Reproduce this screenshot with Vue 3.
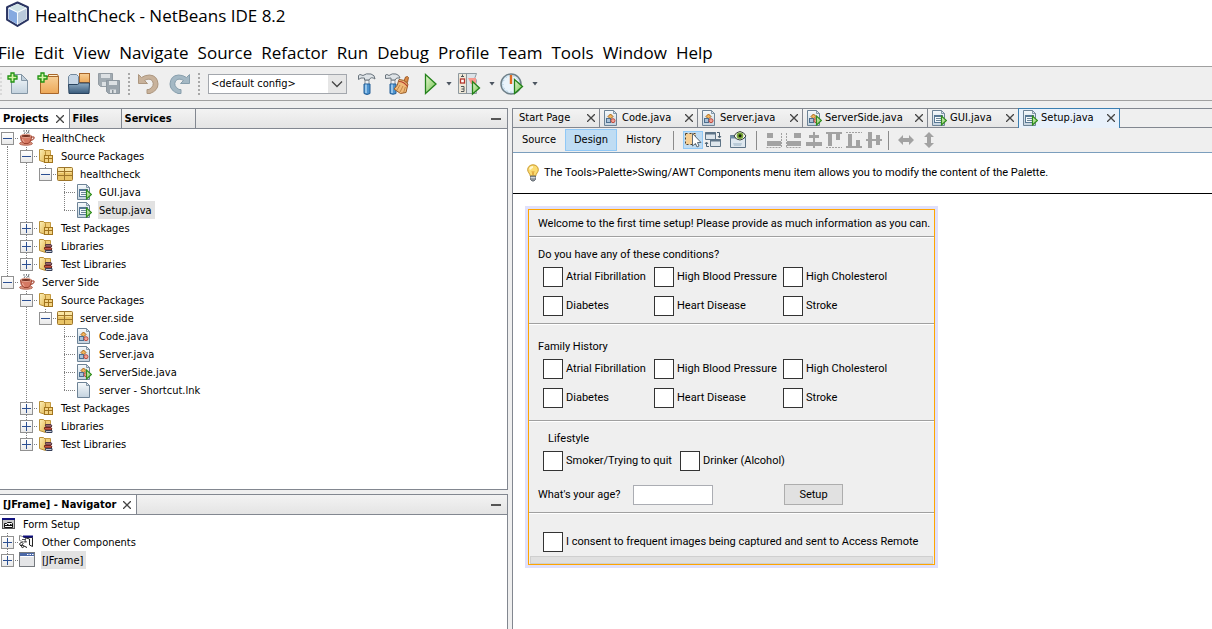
<template>
  <div class="ide">
    <svg class="sprite" aria-hidden="true">
      <linearGradient id="g-paper" x1="0" y1="0" x2="0" y2="1">
        <stop offset="0" stop-color="#f6fafc" />
        <stop offset="1" stop-color="#c3d2de" />
      </linearGradient>
      <linearGradient id="g-orange" x1="0" y1="0" x2="0" y2="1">
        <stop offset="0" stop-color="#f7cf96" />
        <stop offset="1" stop-color="#eda858" />
      </linearGradient>
      <linearGradient id="g-green" x1="0" y1="0" x2="1" y2="1">
        <stop offset="0" stop-color="#eaf8d4" />
        <stop offset="1" stop-color="#6cc04a" />
      </linearGradient>
      <linearGradient id="g-blue" x1="0" y1="0" x2="0" y2="1">
        <stop offset="0" stop-color="#8fabc2" />
        <stop offset="1" stop-color="#385a7b" />
      </linearGradient>
      <linearGradient id="g-folder" x1="0" y1="0" x2="1" y2="1">
        <stop offset="0" stop-color="#fdf0b8" />
        <stop offset="1" stop-color="#e2b652" />
      </linearGradient>

      <symbol id="i-cup" viewBox="0 0 16 16">
        <path d="M5 0v1.500l1 1-1 1.500M7.500 0v1.500l1 1-1 1.500M10 0l-.5 2 .5 1.500" fill="none" stroke="#6f7376" />
        <ellipse cx="7" cy="13.500" rx="6.500" ry="1.800" fill="#d9907b" stroke="#a44f3b" stroke-width=".7" />
        <path d="M1.500 6h11q.3 5.500-3.500 7.500H5Q1.300 11.500 1.500 6z" fill="#d57963" stroke="#9c4230" />
        <ellipse cx="7" cy="6" rx="5.300" ry="1.600" fill="#743223" stroke="#e5a08c" />
        <path d="M12.300 7.200q3.300-1 2.700 1-1 2-4 2.500" fill="none" stroke="#a74936" stroke-width="1.200" />
        <path d="M3.500 9q.5 2.300 2 3.300" stroke="#f1b3a1" fill="none" />
      </symbol>
      <symbol id="i-folder" viewBox="0 0 16 16">
        <path d="M6 2.500h6.500V13H6z" fill="#f0cd79" stroke="#c39a42" />
        <path d="M1.500 1.500h4l2 2v11l-6-2z" fill="url(#g-folder)" stroke="#b88f37" />
      </symbol>
      <symbol id="i-pkgfolder" viewBox="0 0 16 16">
        <use href="#i-folder" />
        <rect x="6.500" y="7.500" width="8" height="7" fill="#f3d383" stroke="#a1741d" />
        <path d="M6 10.500h9M10.500 7v8" stroke="#a1741d" />
      </symbol>
      <symbol id="i-libfolder" viewBox="0 0 16 16">
        <use href="#i-folder" />
        <path d="M7.500 6.500H13l1 1.500-1 1H8.500q-1.500-1-1-2.500z" fill="#a0656c" stroke="#513843" />
        <path d="M6.500 9.500H13l1 1.500-1 1H7.500q-1.500-1-1-2.500z" fill="#c15445" stroke="#6f241b" />
        <path d="M7.500 12.500H14v2H8.500q-1.500 0-1-2z" fill="#c5cad6" stroke="#36405a" />
      </symbol>
      <symbol id="i-package" viewBox="0 0 16 16">
        <rect x=".5" y="1.500" width="15" height="13" rx="1" fill="#e9c466" stroke="#9d752a" />
        <path d="M1 2h14v3H1z" fill="#fae5a2" />
        <path d="M1 5.500h14M1 9.500h14M7.500 2v12" stroke="#9d752a" />
        <path d="M1.500 6.500h5M8.500 6.500h6" stroke="#f8dd92" />
      </symbol>
      <symbol id="i-page" viewBox="0 0 16 16">
        <path d="M1.500.5h9l3 3v12h-12z" fill="url(#g-paper)" stroke="#6d8396" />
        <path d="M10.500.5v3h3z" fill="#dce7ef" stroke="#6d8396" stroke-width=".8" />
      </symbol>
      <symbol id="i-run" viewBox="0 0 16 16">
        <path d="M10.500 6v9l5-4.500z" fill="url(#g-green)" stroke="#2f8c1c" stroke-width="1.200" />
      </symbol>
      <symbol id="i-form" viewBox="0 0 16 16">
        <use href="#i-page" />
        <rect x="3.500" y="5.500" width="8" height="7" fill="#f5f9fb" stroke="#587895" />
        <path d="M3 6h9" stroke="#587895" stroke-width="2" />
        <path d="M5 8.500h5M5 10.500h5" stroke="#6c8598" />
        <use href="#i-run" />
      </symbol>
      <symbol id="i-class" viewBox="0 0 16 16">
        <use href="#i-page" />
        <path d="M7.500 4L10 6.500 7.500 9 5 6.500z" fill="#f1b45c" stroke="#a66318" />
        <rect x="3.500" y="8.500" width="4" height="4" fill="#a9c1d8" stroke="#4d6f8f" />
        <circle cx="10" cy="10.700" r="2" fill="#f2a092" stroke="#bc4c40" />
      </symbol>
      <symbol id="i-mainclass" viewBox="0 0 16 16">
        <use href="#i-class" />
        <use href="#i-run" />
      </symbol>
      <symbol id="i-formroot" viewBox="0 0 16 16">
        <rect x=".5" y="2.500" width="12" height="10" fill="#c9c9c9" stroke="#555" />
        <path d="M0 3h13" stroke="#10107e" stroke-width="2" />
        <path d="M2.500 11.500v-4h2l1-1h4l1 1v4zM5 8.500h1.500M8 8.500h1.500M2.500 9.500h8" fill="#f8f8f8" stroke="#111" />
      </symbol>
      <symbol id="i-other" viewBox="0 0 16 16">
        <path d="M.5 1.500l6 2v5l-6-2z" fill="#fff" stroke="#888" />
        <path d="M5.500 3.500h8v9l-3-1.500V5z" fill="#f6f6f6" stroke="#222" />
        <path d="M4 2.500h10" stroke="#10107e" stroke-width="2" />
        <path d="M3 5.500h4M5 7l3 1" stroke="#555" />
        <path d="M.5 10l2-2L4 9.500 2 12zM3 11l5 2.500M2 12.500q2 2 3 0" fill="#fff" stroke="#111" />
      </symbol>
      <symbol id="i-frame" viewBox="0 0 16 16">
        <rect x=".5" y=".5" width="15" height="14" fill="#e4e5e7" stroke="#75797e" />
        <path d="M1 2.500h14" stroke="#4c69a8" stroke-width="3" />
        <path d="M8 2.500h1.500M10.500 2.500H12M13 2.500h1.500" stroke="#fff" />
        <path d="M1.500 4.500h13" stroke="#fff" />
      </symbol>
      <symbol id="i-bulb" viewBox="0 0 16 18">
        <path d="M8 .8c-3.200 0-5.300 2.200-5.300 5 0 2.500 2.300 3.600 2.600 6.200h5.400c.3-2.600 2.600-3.700 2.600-6.200 0-2.800-2.100-5-5.300-5z" fill="#fbdc72" stroke="#c9982b" />
        <path d="M5 5.500q.8-2.500 3-2.500" stroke="#fff7cf" stroke-width="2" fill="none" />
        <path d="M7 7l1 4 1-4" fill="none" stroke="#d4902a" stroke-width=".7" />
        <path d="M5.500 12h5v3.500l-1.500 1.500H7l-1.500-1.500z" fill="#8d949a" stroke="#555d66" stroke-width=".8" />
        <path d="M5.500 13.700h5" stroke="#e2e6e9" />
      </symbol>

      <symbol id="t-plus" viewBox="0 0 24 24">
        <path d="M4 1h3v3h3v3H7v3H4V7H1V4h3z" fill="#d6f5a6" stroke="#1f9312" stroke-width="1.300" />
      </symbol>
      <symbol id="t-newfile" viewBox="0 0 24 24">
        <path d="M4.500 2.500h10l6 6v13h-16z" fill="url(#g-paper)" stroke="#8496a5" />
        <path d="M14.500 2.500v6h6z" fill="#c3d1dc" stroke="#8496a5" />
        <use href="#t-plus" />
      </symbol>
      <symbol id="t-newproj" viewBox="0 0 24 24">
        <path d="M3.500 4.500h18v17h-18z" fill="url(#g-orange)" stroke="#a8662a" />
        <path d="M11.500 2.500h9l1 2h-10z" fill="#fff0cc" stroke="#a8662a" />
        <use href="#t-plus" />
      </symbol>
      <symbol id="t-open" viewBox="0 0 24 24">
        <path d="M1.500 13V4.500l2-2h6l2 2V13z" fill="#c6d6e6" stroke="#72889c" />
        <rect x="12.500" y="1.500" width="10" height="9" fill="url(#g-orange)" stroke="#a8662a" />
        <path d="M1.500 12.500h9l2-1.500h10l-.5 10.500h-20z" fill="url(#g-blue)" stroke="#29435e" />
      </symbol>
      <symbol id="t-save" viewBox="0 0 24 24">
        <path d="M1.500 1.500h14v13h-12l-2-2z" fill="#a2abb2" stroke="#949ca3" />
        <path d="M4 2h9v4H4zM5 10h7v4H5z" fill="#dce0e3" />
        <path d="M9.500 8.500h13v13h-11l-2-2z" fill="#9aa4ac" stroke="#8d979f" />
        <path d="M12 9h8v4h-8zM13 17.500h6V21h-6z" fill="#dce0e3" />
        <path d="M15 18h1.500v3H15z" fill="#89939a" />
      </symbol>
      <symbol id="t-undo" viewBox="0 0 24 24">
        <path d="M1.500 2.500v9h9L7.500 8.500q5-3 8 .5 2.500 5-3.500 8.500h-2v4h3q8-3 8-9.500-.5-8.500-8.500-9Q8 3 4.500 5.500z" fill="#c8b29b" stroke="#ac967f" />
      </symbol>
      <symbol id="t-redo" viewBox="0 0 24 24">
        <path d="M22.500 2.500v9h-9l3-3q-5-3-8 .5-2.500 5 3.500 8.500h2v4h-3q-8-3-8-9.500.5-8.500 8.500-9 4.500 0 8 2.500z" fill="#a4b8c4" stroke="#879eac" />
      </symbol>
      <symbol id="t-hammer" viewBox="0 0 24 24">
        <path d="M10 8h4v6h-4z" fill="#eef1f3" stroke="#727b83" stroke-width=".8" />
        <path d="M3.500 7.500v-4L5 2.500l3 1q3-2.500 8-1.500 4 1 4 5-4-3-6 1H9.500V6L6 6z" fill="#dee3e7" stroke="#6a747d" />
        <path d="M9 12h6v9.500q-3 2-6 0z" fill="#4d93cf" stroke="#245e96" />
        <path d="M11 12.500V21" stroke="#b8dcf6" stroke-width="1.400" />
      </symbol>
      <symbol id="t-clean" viewBox="0 0 24 24">
        <path d="M6 8h4v6H6z" fill="#eef1f3" stroke="#727b83" stroke-width=".8" />
        <path d="M.5 6.500V3L2 2.500l2 1q3-2.500 7-1.500 3.500 1 4 4-4-1-5 2H6V6z" fill="#dee3e7" stroke="#6a747d" />
        <path d="M5 12h6v9.500q-3 1.500-6 0z" fill="#4d93cf" stroke="#245e96" />
        <path d="M7 12.500V21" stroke="#b8dcf6" stroke-width="1.400" />
        <path d="M19 9l1.500-4 2-.5 1 1-1 5z" fill="#dc8a44" stroke="#8c4a17" stroke-width=".8" />
        <path d="M14 7.500q5-.5 9 4.500l-2 8.500-5.500 1L9 17q4-3 5-9.500z" fill="#f0ba78" stroke="#9a5c26" />
        <path d="M14 9.500q5 0 8.500 5" stroke="#b5402d" stroke-width="1.200" fill="none" />
        <path d="M12 18l3-5M15 20l3-6M18.500 21l1.800-6" stroke="#b5783a" stroke-width=".8" />
      </symbol>
      <symbol id="t-run" viewBox="0 0 14 22">
        <path d="M1.500 1.500v19L12 11z" fill="url(#g-green)" stroke="#23821a" stroke-width="1.300" />
      </symbol>
      <symbol id="t-debug" viewBox="0 0 24 24">
        <path d="M1.500 1.500h18l-1.500 4 1.500 3-1 5 1 8h-18z" fill="#dce3e8" stroke="#8e999f" />
        <path d="M2 2h7v19H2z" fill="#efe8d8" />
        <path d="M9.500 1.500v20" stroke="#8a9298" />
        <rect x="3.500" y="7" width="4" height="4" fill="#fff" stroke="#b3352d" stroke-width="1.300" />
        <path d="M4 4.500h3M5.500 2.500v2M4 14.500h3v5H4M4.500 17h2.500" fill="none" stroke="#4f5659" />
        <path d="M11 6h8v6h-5z" fill="#f7998e" />
        <path d="M15.500 9.500v12.500l7-6z" fill="url(#g-green)" stroke="#23821a" stroke-width="1.300" />
      </symbol>
      <symbol id="t-profile" viewBox="0 0 24 24">
        <circle cx="11" cy="12" r="10" fill="#d5e9f7" stroke="#6f8089" stroke-width="1.500" />
        <circle cx="11" cy="12" r="8" fill="#eaf4fb" stroke="#a5c1d3" stroke-dasharray="1 3" />
        <path d="M11 3v9" stroke="#df6b22" stroke-width="2.400" />
        <path d="M14.500 7.500v14l8-7z" fill="url(#g-green)" stroke="#23821a" stroke-width="1.300" />
      </symbol>

      <symbol id="d-select" viewBox="0 0 18 18">
        <path d="M1.500 2.500h10v11h-10z" fill="#f6cf94" stroke="#50402a" stroke-dasharray="2 2" />
        <path d="M8.500 2.500v12.500l3-2.500 1.500 3.500 2-1-1.500-3.500h3.500z" fill="#fff" stroke="#5c6b78" />
      </symbol>
      <symbol id="d-connect" viewBox="0 0 18 18">
        <path d="M1.500 1.500h10v7h-10zM6.500 8.500h10v7h-10z" fill="#dee6ec" stroke="#5e7487" />
        <path d="M1 2.500h11M6 9.500h11" stroke="#5e7487" stroke-width="2" />
        <path d="M13 1.500h2.500V6M14 5l1.500 2L17 5M5 15.500H2.500V12M1 13l1.500-2L4 13" fill="none" stroke="#4a5f70" />
      </symbol>
      <symbol id="d-preview" viewBox="0 0 18 18">
        <path d="M1.500 4.500h15v12h-15z" fill="#dfe8ef" stroke="#5e7487" />
        <path d="M1 6h16" stroke="#6e8ca5" stroke-width="3" />
        <path d="M4 12h9l-1 3H5z" fill="#b9cad7" />
        <path d="M5 5q2-4 6-4.500 4 .5 6 4.500-3 4-6 4-4 0-6-4z" fill="#f4f4ec" stroke="#39423a" />
        <circle cx="11" cy="4.800" r="3.300" fill="#77a637" />
        <circle cx="11" cy="4.800" r="1.500" fill="#151d0c" />
      </symbol>
      <symbol id="d-left" viewBox="0 0 16 16">
        <path d="M1 1h6v5H1zM1 9h14v5H1z" /><path class="dash" d="M.5 15.500h15M15.500 1v14" />
      </symbol>
      <symbol id="d-right" viewBox="0 0 16 16">
        <path d="M8 1h7v5H8zM1 9h14v5H1z" /><path class="dash" d="M.5 15.500h15M.5 1v14" />
      </symbol>
      <symbol id="d-center" viewBox="0 0 16 16">
        <path d="M3 3h10v3H3zM0 10h16v4H0zM7 0h2v16H7z" />
      </symbol>
      <symbol id="d-top" viewBox="0 0 16 16">
        <path d="M0 0h16v2H0zM2 2h4v12H2zM10 2h4v6h-4z" /><path class="dash" d="M0 15.500h16" />
      </symbol>
      <symbol id="d-bottom" viewBox="0 0 16 16">
        <path d="M0 14h16v2H0zM2 2h4v12H2zM10 8h4v6h-4z" /><path class="dash" d="M0 .5h16" />
      </symbol>
      <symbol id="d-middle" viewBox="0 0 16 16">
        <path d="M0 7h16v2H0zM2 0h4v16H2zM10 3h4v10h-4z" />
      </symbol>
      <symbol id="d-horiz" viewBox="0 0 16 16">
        <path d="M0 8l5-5v3h6V3l5 5-5 5v-3H5v3z" />
      </symbol>
      <symbol id="d-vert" viewBox="0 0 16 16">
        <path d="M8 0l5 5h-3v6h3l-5 5-5-5h3V5H3z" />
      </symbol>
    </svg>

    <header class="titlebar">
      <svg class="logo" viewBox="0 0 24 24">
        <path d="M12 1l10 4.500v12L12 23.500l-10-6v-12z" fill="#fff" stroke="#2b3563" stroke-width="2" stroke-linejoin="round" />
        <path d="M12 2.500l8.500 3.500L12 10 3.500 6z" fill="#cfe2e6" />
        <path d="M3.500 6.500L12 10.500V22l-8.500-5z" fill="#86a9e0" />
        <path d="M20.500 6.500L12 10.500V22l8.500-5z" fill="#b9c9dc" />
        <path d="M12 10.500V22M4 6.500l8 4 8-4" fill="none" stroke="#f5fafd" />
      </svg>
      <h1>HealthCheck - NetBeans IDE 8.2</h1>
    </header>

    <nav class="menubar">
      <button v-for="m in menus" :key="m" type="button">{{ m }}</button>
    </nav>

    <div class="toolbar">
      <span class="grip first"></span>
      <button v-for="t in fileTools" :key="t" type="button" class="tool" :aria-label="t">
        <svg><use :href="'#t-' + t" /></svg>
      </button>
      <span class="grip"></span>
      <button v-for="t in editTools" :key="t" type="button" class="tool" :aria-label="t">
        <svg><use :href="'#t-' + t" /></svg>
      </button>
      <span class="grip"></span>
      <div class="config">
        <select aria-label="Configuration">
          <option>&lt;default config&gt;</option>
        </select>
        <svg viewBox="0 0 12 8"><path d="M1 1.500l5 5 5-5" fill="none" stroke="#444" stroke-width="1.300" /></svg>
      </div>
      <button v-for="t in buildTools" :key="t" type="button" class="tool" :aria-label="t">
        <svg><use :href="'#t-' + t" /></svg>
      </button>
      <template v-for="t in runTools" :key="t">
        <button type="button" class="tool" :class="{ slim: t === 'run' }" :aria-label="t">
          <svg><use :href="'#t-' + t" /></svg>
        </button>
        <button type="button" class="more" :aria-label="t + ' options'"></button>
      </template>
    </div>

    <div class="workspace">
      <aside class="side">
        <section class="panel">
          <div class="panel-tabs">
            <div class="panel-tab active">
              <button type="button">Projects</button>
              <button type="button" class="close" aria-label="Close"><svg viewBox="0 0 8 8"><path d="M0 0l8 8M8 0L0 8" /></svg></button>
            </div>
            <div class="panel-tab files"><button type="button">Files</button></div>
            <div class="panel-tab services"><button type="button">Services</button></div>
            <button type="button" class="minimize" aria-label="Minimize"></button>
          </div>
          <ul class="tree">
            <li v-for="(n, i) in projectTree" :key="i">
              <span v-for="(g, k) in n.guides" :key="k" class="guide" :class="g"></span>
              <button v-if="n.toggle" type="button" class="handle" :class="n.toggle" :aria-label="n.toggle"></button>
              <svg class="node-icon"><use :href="'#i-' + n.icon" /></svg>
              <span class="node" :class="{ selected: n.selected }">{{ n.label }}</span>
            </li>
          </ul>
        </section>

        <section class="panel">
          <div class="panel-tabs">
            <div class="panel-tab active">
              <button type="button">[JFrame] - Navigator</button>
              <button type="button" class="close" aria-label="Close"><svg viewBox="0 0 8 8"><path d="M0 0l8 8M8 0L0 8" /></svg></button>
            </div>
            <button type="button" class="minimize" aria-label="Minimize"></button>
          </div>
          <ul class="tree">
            <li class="tree-root">
              <svg class="node-icon"><use href="#i-formroot" /></svg>
              <span class="node">Form Setup</span>
            </li>
            <li v-for="(n, i) in navigatorTree" :key="i">
              <span v-for="(g, k) in n.guides" :key="k" class="guide" :class="g"></span>
              <button type="button" class="handle" :class="n.toggle" :aria-label="n.toggle"></button>
              <svg class="node-icon"><use :href="'#i-' + n.icon" /></svg>
              <span class="node" :class="{ selected: n.selected }">{{ n.label }}</span>
            </li>
          </ul>
        </section>
      </aside>

      <main class="editor">
        <div class="editor-tabs">
          <div
            v-for="t in editorTabs"
            :key="t.label"
            class="editor-tab"
            :class="{ active: t.active }"
            :style="{ minWidth: t.width + 'px' }"
          >
            <svg v-if="t.icon" class="tab-icon"><use :href="'#i-' + t.icon" /></svg>
            <button type="button">{{ t.label }}</button>
            <button type="button" class="close" aria-label="Close"><svg viewBox="0 0 8 8"><path d="M0 0l8 8M8 0L0 8" /></svg></button>
          </div>
        </div>

        <div class="design-bar">
          <button v-for="v in views" :key="v" type="button" class="view" :class="{ active: v === view }" @click="view = v">{{ v }}</button>
          <span class="divider"></span>
          <button v-for="m in modes" :key="m" type="button" class="mode" :class="m" :aria-label="m">
            <svg><use :href="'#d-' + m" /></svg>
          </button>
          <span class="divider"></span>
          <button v-for="a in aligns" :key="a" type="button" class="align" :aria-label="'Align ' + a">
            <svg><use :href="'#d-' + a" /></svg>
          </button>
          <span class="divider"></span>
          <button v-for="a in resizes" :key="a" type="button" class="align resize" :aria-label="'Resize ' + a">
            <svg><use :href="'#d-' + a" /></svg>
          </button>
        </div>

        <div class="tip">
          <svg><use href="#i-bulb" /></svg>
          <p>The Tools&gt;Palette&gt;Swing/AWT Components menu item allows you to modify the content of the Palette.</p>
        </div>

        <div class="canvas">
          <form class="frame" @submit.prevent>
            <p class="welcome">Welcome to the first time setup! Please provide as much information as you can.</p>

            <fieldset>
              <legend>Do you have any of these conditions?</legend>
              <div class="checks">
                <label v-for="c in conditions" :key="c"><input type="checkbox" />{{ c }}</label>
              </div>
            </fieldset>

            <fieldset class="family">
              <legend>Family History</legend>
              <div class="checks">
                <label v-for="c in conditions" :key="c"><input type="checkbox" />{{ c }}</label>
              </div>
            </fieldset>

            <fieldset class="lifestyle">
              <legend>Lifestyle</legend>
              <div class="checks habits">
                <label v-for="h in habits" :key="h"><input type="checkbox" />{{ h }}</label>
              </div>
              <div class="age-row">
                <label for="age">What's your age?</label>
                <input id="age" type="text" />
                <button type="submit">Setup</button>
              </div>
            </fieldset>

            <div class="consent">
              <label><input type="checkbox" />I consent to frequent images being captured and sent to Access Remote</label>
            </div>
            <div class="scroll-strip"></div>
          </form>
        </div>
      </main>
    </div>
  </div>
</template>

<script setup>
import { ref } from 'vue'

const menus = ['File', 'Edit', 'View', 'Navigate', 'Source', 'Refactor', 'Run', 'Debug', 'Profile', 'Team', 'Tools', 'Window', 'Help']

const fileTools = ['newfile', 'newproj', 'open', 'save']
const editTools = ['undo', 'redo']
const buildTools = ['hammer', 'clean']
const runTools = ['run', 'debug', 'profile']

// guides: one entry per indent column, left to right
const projectTree = [
  { guides: ['down'], toggle: 'minus', icon: 'cup', label: 'HealthCheck' },
  { guides: ['line', 'tee'], toggle: 'minus', icon: 'pkgfolder', label: 'Source Packages' },
  { guides: ['line', 'line', 'elbow'], toggle: 'minus', icon: 'package', label: 'healthcheck' },
  { guides: ['line', 'line', '', 'tee'], icon: 'form', label: 'GUI.java' },
  { guides: ['line', 'line', '', 'elbow'], icon: 'form', label: 'Setup.java', selected: true },
  { guides: ['line', 'tee'], toggle: 'plus', icon: 'pkgfolder', label: 'Test Packages' },
  { guides: ['line', 'tee'], toggle: 'plus', icon: 'libfolder', label: 'Libraries' },
  { guides: ['line', 'elbow'], toggle: 'plus', icon: 'libfolder', label: 'Test Libraries' },
  { guides: ['elbow'], toggle: 'minus', icon: 'cup', label: 'Server Side' },
  { guides: ['', 'tee'], toggle: 'minus', icon: 'pkgfolder', label: 'Source Packages' },
  { guides: ['', 'line', 'elbow'], toggle: 'minus', icon: 'package', label: 'server.side' },
  { guides: ['', 'line', '', 'tee'], icon: 'class', label: 'Code.java' },
  { guides: ['', 'line', '', 'tee'], icon: 'class', label: 'Server.java' },
  { guides: ['', 'line', '', 'tee'], icon: 'mainclass', label: 'ServerSide.java' },
  { guides: ['', 'line', '', 'elbow'], icon: 'page', label: 'server - Shortcut.lnk' },
  { guides: ['', 'tee'], toggle: 'plus', icon: 'pkgfolder', label: 'Test Packages' },
  { guides: ['', 'tee'], toggle: 'plus', icon: 'libfolder', label: 'Libraries' },
  { guides: ['', 'elbow'], toggle: 'plus', icon: 'libfolder', label: 'Test Libraries' },
]

const navigatorTree = [
  { guides: ['tee'], toggle: 'plus', icon: 'other', label: 'Other Components' },
  { guides: ['elbow'], toggle: 'plus', icon: 'frame', label: '[JFrame]', selected: true },
]

const editorTabs = [
  { label: 'Start Page', width: 87 },
  { label: 'Code.java', icon: 'class', width: 98 },
  { label: 'Server.java', icon: 'class', width: 105 },
  { label: 'ServerSide.java', icon: 'mainclass', width: 125 },
  { label: 'GUI.java', icon: 'form', width: 91 },
  { label: 'Setup.java', icon: 'form', width: 102, active: true },
]

const views = ['Source', 'Design', 'History']
const view = ref('Design')
const modes = ['select', 'connect', 'preview']
const aligns = ['left', 'right', 'center', 'top', 'bottom', 'middle']
const resizes = ['horiz', 'vert']

const conditions = ['Atrial Fibrillation', 'High Blood Pressure', 'High Cholesterol', 'Diabetes', 'Heart Disease', 'Stroke']
const habits = ['Smoker/Trying to quit', 'Drinker (Alcohol)']
</script>

<style>
body {
  margin: 0;
  background: #fff;
}
</style>

<style scoped>
.ide {
  display: flex;
  flex-direction: column;
  min-height: 100vh;
  background: #efefef;
  color: #000;
  font: 11px/18px "DejaVu Sans Condensed", "Liberation Sans", sans-serif;
}

.sprite {
  position: absolute;
  width: 0;
  height: 0;
}

button {
  margin: 0;
  padding: 0;
  border: 0;
  background: none;
  color: inherit;
  font: inherit;
  white-space: nowrap;
}

svg {
  display: block;
  flex-shrink: 0;
}

/* title and menus */
.titlebar {
  display: flex;
  align-items: center;
  gap: 5px;
  height: 32px;
  padding-left: 5px;
  background: #fff;
}

.logo {
  width: 25px;
  height: 26px;
  margin-bottom: 4px;
}

.titlebar h1 {
  margin: 0;
  font: 17px/24px "Open Sans", "Noto Sans", sans-serif;
}

.menubar {
  box-sizing: border-box;
  display: flex;
  align-items: center;
  gap: 9px;
  height: 35px;
  padding-top: 8px;
  background: #fff;
  border-bottom: 1px solid #a0a0a0;
  font: 17px/24px "Open Sans", "Noto Sans", sans-serif;
}

.menubar button:first-child {
  margin-left: -2px;
}

/* main toolbar */
.toolbar {
  display: flex;
  align-items: center;
  height: 33px;
  border-bottom: 1px solid #a0a0a0;
}

.grip {
  width: 2px;
  height: 22px;
  margin: 0 4px;
  background: repeating-linear-gradient(#a8a8a8 0 2px, transparent 2px 4px);
}

.grip.first {
  margin: 0 2px 0 0;
  opacity: 0.3;
}

.tool {
  padding: 0 3px;
}

.tool svg {
  width: 24px;
  height: 24px;
}

.tool.slim {
  margin-left: 9px;
}

.tool.slim svg {
  width: 14px;
  height: 22px;
}

.more {
  width: 6px;
  height: 4px;
  margin: 0 2px 0 5px;
  background: #4c5560;
  clip-path: polygon(0 0, 100% 0, 50% 100%);
}

.config {
  position: relative;
  width: 139px;
  margin: 0 5px 0 4px;
}

.config select {
  width: 100%;
  height: 20px;
  padding: 0 20px 0 2px;
  border: 1px solid #a3a7ad;
  border-radius: 0;
  appearance: none;
  background: linear-gradient(90deg, #fff 0 calc(100% - 18px), #e6e6e6 calc(100% - 18px));
  font: inherit;
  color: #000;
}

.config svg {
  position: absolute;
  right: 4px;
  top: 6px;
  width: 12px;
  height: 8px;
  pointer-events: none;
}

.workspace {
  display: flex;
  flex: 1;
  gap: 4px;
  padding-top: 7px;
}

/* left panels */
.side {
  display: grid;
  grid-template-rows: 1fr 135px;
  gap: 4px;
  flex: 0 0 508px;
}

.panel {
  border: 1px solid #828790;
  border-left: 0;
  background: #fff;
}

.panel:last-child {
  border-bottom: 0;
}

.panel-tabs {
  display: flex;
  height: 19px;
  border-bottom: 1px solid #828790;
  background: linear-gradient(#f3f3f3, #e4e4e4);
  font-weight: bold;
}

.panel-tab {
  display: flex;
  align-items: center;
  justify-content: space-between;
  gap: 7px;
  padding: 0 5px 0 3px;
  border-right: 1px solid #828790;
}

.panel-tab.active {
  background: #fff;
}

.panel-tab.files {
  width: 43px;
}

.panel-tab.services {
  width: 65px;
}

.close svg {
  width: 8px;
  height: 8px;
  stroke: #444;
  stroke-width: 1.300;
}

.minimize {
  align-self: center;
  width: 10px;
  height: 2px;
  margin: 0 6px 0 auto;
  background: #555;
}

.tree {
  margin: 0;
  padding: 0;
  list-style: none;
}

.tree li {
  display: flex;
  align-items: center;
  height: 18px;
}

.guide {
  position: relative;
  width: 19px;
  height: 18px;
}

.guide::before,
.guide::after {
  position: absolute;
  left: 7px;
}

.line::before,
.tee::before,
.elbow::before,
.down::before {
  content: "";
  top: 0;
  width: 1px;
  height: 18px;
  background: repeating-linear-gradient(#808080 0 1px, transparent 1px 2px);
}

.elbow::before {
  height: 9px;
}

.down::before {
  top: 9px;
  height: 9px;
}

.tee::after,
.elbow::after,
.down::after {
  content: "";
  top: 9px;
  width: 11px;
  height: 1px;
  background: repeating-linear-gradient(90deg, #808080 0 1px, transparent 1px 2px);
}

.handle {
  position: relative;
  box-sizing: border-box;
  width: 13px;
  height: 13px;
  margin: 0 5px 0 -18px;
  border: 1px solid #919191;
  background: linear-gradient(#fff, #e9e9e9);
}

.handle::before,
.plus::after {
  content: "";
  position: absolute;
  left: 1px;
  top: 5px;
  width: 9px;
  height: 1px;
  background: #2b4f93;
}

.plus::after {
  left: 5px;
  top: 1px;
  width: 1px;
  height: 9px;
}

.node-icon,
.tab-icon {
  width: 16px;
  height: 16px;
}

.node {
  margin-left: 6px;
  padding: 2px 3px 0 1px;
  line-height: 16px;
}

.node.selected {
  background: #e2e2e2;
}

.tree-root .node-icon {
  margin-left: 2px;
}

.tree-root .node {
  margin-left: 4px;
}

/* editor */
.editor {
  display: flex;
  flex-direction: column;
  flex: 1;
  min-width: 0;
  border-top: 1px solid #828790;
  border-left: 1px solid #828790;
  background: #efefef;
}

.editor-tabs {
  display: flex;
  height: 18px;
  border-bottom: 1px solid #828790;
}

.editor-tab {
  box-sizing: border-box;
  display: flex;
  align-items: center;
  gap: 3px;
  padding: 0 4px 0 3px;
  border-right: 1px solid #828790;
  background: linear-gradient(#f3f3f3, #e6e6e6);
}

.editor-tab:first-child {
  padding-left: 6px;
}

.editor-tab .close {
  margin-left: auto;
}

.editor-tab.active {
  height: 20px;
  margin: -1px 0 -1px -1px;
  padding-bottom: 1px;
  border: 1px solid #3c7fb1;
  border-bottom: 0;
  background: #e8f1fb;
}

.design-bar {
  display: flex;
  align-items: center;
  height: 24px;
  border-bottom: 1px solid #7b9ebd;
}

.view {
  height: 22px;
  padding: 0 8px;
  border: 1px solid transparent;
}

.view.active {
  border-color: #90c8f6;
  background: #bfdcf3;
}

.divider {
  width: 1px;
  height: 19px;
  margin: 0 9px;
  background: #8b8b8b;
}

.view + .divider {
  margin-left: 3px;
}

.mode {
  margin-right: 7px;
}

.mode svg {
  width: 18px;
  height: 18px;
}

.mode.select {
  margin-right: 1px;
  padding: 0 1px;
  background: #bfdcf3;
  box-shadow: inset 0 0 0 1px #90c8f6;
}

.mode.preview {
  margin-right: 0;
}

.align {
  margin-right: 4px;
}

.align:has(+ .divider) {
  margin-right: -3px;
}

.align svg {
  width: 16px;
  height: 16px;
  fill: #a2a2a2;
}

.resize {
  margin-right: 7px;
}

.dash {
  fill: none;
  stroke: #a2a2a2;
  stroke-dasharray: 2 1;
}

.tip {
  display: flex;
  align-items: center;
  gap: 3px;
  height: 40px;
  padding-left: 12px;
  border-bottom: 1px solid #000;
  background: #fff;
  font-family: Roboto, "Liberation Sans", sans-serif;
}

.tip svg {
  width: 16px;
  height: 18px;
}

.tip p {
  margin: 0;
}

.canvas {
  flex: 1;
  padding: 12px;
  background: #fff;
}

/* designed form */
.frame {
  box-sizing: border-box;
  width: 407px;
  margin: 3px;
  border: 1px solid #ffa500;
  outline: 3px solid #e0e0fb;
  background: #efefef;
  font-family: Roboto, "Liberation Sans", sans-serif;
}

.welcome {
  margin: 0;
  padding: 5px 9px 3px;
  border-bottom: 1px solid #a0a0a0;
  white-space: nowrap;
}

fieldset,
.consent {
  min-width: 0;
  margin: 0;
  padding: 8px 9px 7px;
  border: 0;
  border-top: 1px solid #fff;
  border-bottom: 1px solid #a0a0a0;
}

legend {
  float: left;
  width: 100%;
  padding: 0;
}

.checks {
  display: grid;
  clear: both;
  grid-template-columns: 111px 129px auto;
  row-gap: 9px;
  padding: 3px 0 0 5px;
}

.checks label,
.consent label {
  display: flex;
  align-items: center;
  gap: 3px;
  height: 20px;
  white-space: nowrap;
}

input[type="checkbox"] {
  box-sizing: border-box;
  flex-shrink: 0;
  width: 20px;
  height: 20px;
  margin: 0;
  border: 1px solid #333;
  appearance: none;
  background: #fff;
}

input[type="checkbox"]:checked {
  background: #444;
  box-shadow: inset 0 0 0 4px #fff;
}

.family {
  padding: 13px 9px 12px;
}

.lifestyle {
  padding: 8px 9px 7px;
}

.lifestyle legend {
  box-sizing: border-box;
  padding-left: 10px;
}

.habits {
  grid-template-columns: 137px auto;
}

.age-row {
  display: flex;
  align-items: center;
  margin-top: 13px;
}

.age-row label {
  width: 95px;
}

.age-row input {
  box-sizing: border-box;
  width: 80px;
  height: 20px;
  margin-right: 71px;
  border: 1px solid #abadb3;
  background: #fff;
  font: inherit;
}

.age-row button {
  width: 59px;
  height: 21px;
  border: 1px solid #adadad;
  background: #e1e1e1;
}

.consent {
  padding: 18px 14px 4px;
  border-bottom: 0;
}

.scroll-strip {
  height: 6px;
  margin: 0 1px;
  border: 1px solid #cfcfcf;
  background: #e0e0e0;
}
</style>
